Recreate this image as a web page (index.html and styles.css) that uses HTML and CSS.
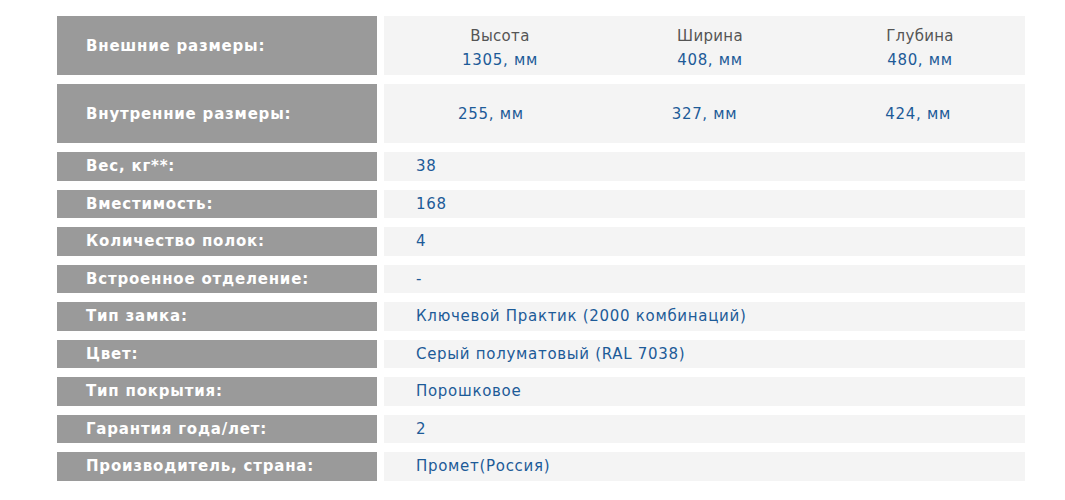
FILE: index.html
```html
<!DOCTYPE html>
<html lang="ru">
<head>
<meta charset="utf-8">
<title>Характеристики</title>
<link rel="stylesheet" href="styles.css">
</head>
<body>
<div class="specs">
  <div class="row tall">
    <div class="label">Внешние размеры:</div>
    <div class="value dims head">
      <div class="dim"><span class="cap">Высота</span><span class="num">1305, мм</span></div>
      <div class="dim"><span class="cap">Ширина</span><span class="num">408, мм</span></div>
      <div class="dim"><span class="cap">Глубина</span><span class="num">480, мм</span></div>
    </div>
  </div>
  <div class="row tall">
    <div class="label">Внутренние размеры:</div>
    <div class="value dims inner">
      <div class="dim"><span class="num">255, мм</span></div>
      <div class="dim"><span class="num">327, мм</span></div>
      <div class="dim"><span class="num">424, мм</span></div>
    </div>
  </div>
  <div class="row"><div class="label">Вес, кг**:</div><div class="value">38</div></div>
  <div class="row"><div class="label">Вместимость:</div><div class="value">168</div></div>
  <div class="row"><div class="label">Количество полок:</div><div class="value">4</div></div>
  <div class="row"><div class="label">Встроенное отделение:</div><div class="value">-</div></div>
  <div class="row"><div class="label">Тип замка:</div><div class="value">Ключевой Практик (2000 комбинаций)</div></div>
  <div class="row"><div class="label">Цвет:</div><div class="value">Серый полуматовый (RAL 7038)</div></div>
  <div class="row"><div class="label">Тип покрытия:</div><div class="value">Порошковое</div></div>
  <div class="row"><div class="label">Гарантия года/лет:</div><div class="value">2</div></div>
  <div class="row"><div class="label">Производитель, страна:</div><div class="value">Промет(Россия)</div></div>
</div>
</body>
</html>
```
FILE: styles.css
```css
html, body {
  margin: 0;
  padding: 0;
  background: #ffffff;
}
body {
  font-family: "DejaVu Sans", sans-serif;
}
.specs {
  display: flex;
  flex-direction: column;
  gap: 9px;
  padding: 16px 0 0 57px;
  width: 968px;
}
.row {
  display: grid;
  grid-template-columns: 320px 641px;
  column-gap: 7px;
  height: 28.5px;
}
.row.tall {
  height: 59px;
}
.label {
  background: #9a9a9a;
  color: #ffffff;
  font-weight: bold;
  font-size: 15px;
  letter-spacing: 0.8px;
  display: flex;
  align-items: center;
  padding-left: 29px;
}
.value {
  background: #f4f4f4;
  color: #1d5b98;
  font-size: 15px;
  letter-spacing: 0.7px;
  display: flex;
  align-items: center;
  padding-left: 32px;
}
.dims {
  display: grid;
  grid-template-columns: repeat(3, 1fr);
  padding-left: 0;
}
.dims.head {
  padding-left: 11px;
  padding-top: 4px;
  grid-template-columns: repeat(3, 210px);
}
.dim {
  display: flex;
  flex-direction: column;
  align-items: center;
  line-height: 24px;
}
.cap {
  color: #555555;
  letter-spacing: 0.3px;
}
.num {
  color: #1d5b98;
}
```
